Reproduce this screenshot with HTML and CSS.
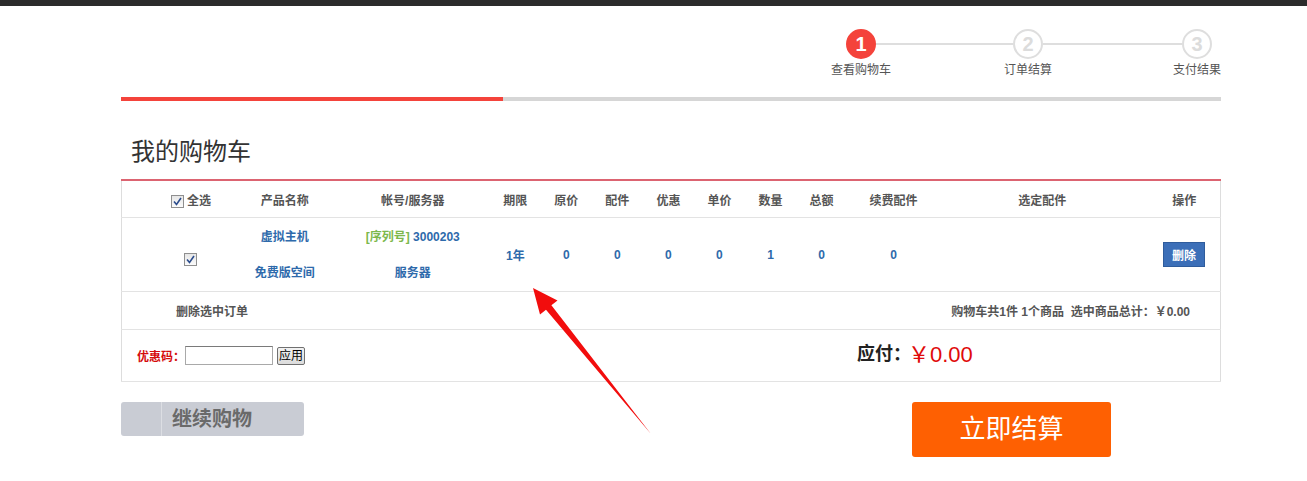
FILE: index.html
```html
<!DOCTYPE html>
<html lang="zh-CN">
<head>
  <meta charset="UTF-8">
  <title>我的购物车</title>
  <link rel="stylesheet" href="styles.css">
</head>
<body>
  <div class="topbar"></div>
  <div class="wrap">
    <div class="steps">
      <div class="step active">
        <span class="num">1</span>
        <span class="label">查看购物车</span>
      </div>
      <div class="line"></div>
      <div class="step">
        <span class="num">2</span>
        <span class="label">订单结算</span>
      </div>
      <div class="line"></div>
      <div class="step">
        <span class="num">3</span>
        <span class="label">支付结果</span>
      </div>
    </div>
    <div class="progress"><div class="progress-done"></div></div>

    <h1 class="title">我的购物车</h1>

    <table class="cart">
      <colgroup>
        <col style="width:118px"><col style="width:100px"><col style="width:150px">
        <col style="width:51px"><col style="width:51px"><col style="width:51px"><col style="width:51px">
        <col style="width:51px"><col style="width:51px"><col style="width:51px">
        <col style="width:93px"><col style="width:204px"><col style="width:76px">
      </colgroup>
      <tr class="head">
        <th class="c-check"><span class="cb"><svg viewBox="0 0 11 11" width="11" height="11"><path d="M2 5.5 L4.5 8.5 L9 2" fill="none" stroke="#2b4c8c" stroke-width="1.6"/></svg></span> 全选</th>
        <th class="c-name">产品名称</th>
        <th class="c-acct">帐号/服务器</th>
        <th>期限</th>
        <th>原价</th>
        <th>配件</th>
        <th>优惠</th>
        <th>单价</th>
        <th>数量</th>
        <th>总额</th>
        <th>续费配件</th>
        <th>选定配件</th>
        <th class="c-op">操作</th>
      </tr>
      <tr class="item">
        <td class="c-check"><span class="cb"><svg viewBox="0 0 11 11" width="11" height="11"><path d="M2 5.5 L4.5 8.5 L9 2" fill="none" stroke="#2b4c8c" stroke-width="1.6"/></svg></span></td>
        <td class="c-name">
          <div class="cell-line"><a href="#">虚拟主机</a></div>
          <div class="cell-line"><a href="#">免费版空间</a></div>
        </td>
        <td class="c-acct">
          <div class="cell-line"><span class="serial">[序列号]</span> 3000203</div>
          <div class="cell-line"><a href="#">服务器</a></div>
        </td>
        <td><a href="#">1年</a></td>
        <td>0</td>
        <td>0</td>
        <td>0</td>
        <td>0</td>
        <td>1</td>
        <td>0</td>
        <td>0</td>
        <td></td>
        <td class="c-op"><button class="del">删除</button></td>
      </tr>
      <tr class="foot">
        <td colspan="13">
          <div class="foot-inner">
            <a href="#" class="del-selected">删除选中订单</a>
            <span class="summary">购物车共1件 1个商品&nbsp; 选中商品总计：￥0.00</span>
          </div>
        </td>
      </tr>
      <tr class="pay">
        <td colspan="13">
          <div class="pay-inner">
            <div class="coupon">
              <span class="coupon-label">优惠码：</span>
              <input type="text" class="coupon-input">
              <button class="coupon-btn">应用</button>
            </div>
            <div class="total">
              <span class="total-label">应付：</span>
              <span class="total-price">￥0.00</span>
            </div>
          </div>
        </td>
      </tr>
    </table>

    <div class="actions">
      <a href="#" class="btn-continue"><span class="btn-side"></span><span class="btn-text">继续购物</span></a>
      <a href="#" class="btn-checkout">立即结算</a>
    </div>
  </div>

  <svg class="arrow" width="1307" height="481" viewBox="0 0 1307 481">
    <polygon points="533,288 557.5,300.5 551.4,305.3 651,434 546,309.7 540,314.5" fill="#f20d0d"/>
  </svg>
</body>
</html>
```

FILE: styles.css
```css
body {
    margin: 0;
    font-family: "Liberation Sans", "Noto Sans CJK SC", sans-serif;
    font-size: 12px;
    color: #555;
    background: #fff;
}
a {
    text-decoration: none;
}
.topbar {
    height: 6px;
    background-color: #2b2b2b;
}
.wrap {
    width: 1100px;
    margin-left: 121px;
}

/* steps */
.steps {
    display: flex;
    justify-content: flex-end;
    align-items: flex-start;
    padding-top: 23px;
    padding-right: 9px;
}
.step {
    width: 30px;
    display: flex;
    flex-direction: column;
    align-items: center;
}
.step .num {
    box-sizing: border-box;
    width: 30px;
    height: 30px;
    border-radius: 50%;
    border: 2px solid #dedede;
    color: #dcdcdc;
    font-size: 20px;
    font-weight: bold;
    line-height: 26px;
    text-align: center;
}
.step.active .num {
    background-color: #f4433b;
    border-color: #f4433b;
    color: #fff;
}
.step .label {
    margin-top: 3px;
    white-space: nowrap;
    line-height: 16px;
    color: #555;
}
.line {
    width: 137px;
    height: 2px;
    margin-top: 14px;
    background-color: #dedede;
}
.line + .step + .line {
    width: 139px;
}
.progress {
    margin-top: 19px;
    height: 4px;
    background-color: #d6d6d6;
}
.progress-done {
    width: 382px;
    height: 4px;
    background-color: #f4433b;
}

.title {
    margin: 35px 0 11px 10px;
    font-size: 24px;
    font-weight: normal;
    line-height: 32px;
    color: #333;
}

/* cart table */
.cart {
    width: 1100px;
    table-layout: fixed;
    border-collapse: collapse;
    border: 1px solid #dddddd;
    border-top: 2px solid #dc6471;
}
.cart tr {
    border-bottom: 1px solid #e3e3e3;
}
.cart th {
    height: 36px;
    padding: 0;
    font-weight: bold;
    color: #555;
    text-align: center;
}
.cart td {
    padding: 0;
    text-align: center;
    vertical-align: middle;
    font-weight: bold;
    color: #2e6aab;
}
.cart .item td {
    height: 73px;
}
.cart .c-check {
    padding-left: 20px;
}
.cart .item .cb {
    margin-top: 9px;
}
.cart .c-name {
    padding-right: 10px;
}
.cart .c-acct {
    padding-right: 4px;
}
.cell-line {
    height: 36px;
    line-height: 36px;
    overflow: hidden;
    white-space: nowrap;
}
.cart .c-op {
    padding-left: 4px;
}
.cart td a {
    color: #2e6aab;
}
.serial {
    color: #7cb84c;
}
.cb {
    display: inline-block;
    box-sizing: border-box;
    width: 13px;
    height: 13px;
    border: 1px solid #8f8f8f;
    background: linear-gradient(#e6e6e6, #fbfbfb);
    vertical-align: -2px;
    line-height: 0;
}
.del {
    width: 42px;
    height: 25px;
    border: 1px solid #2f5c9c;
    background-color: #3c6fb8;
    color: #fff;
    font-family: inherit;
    font-size: 12px;
    font-weight: bold;
    padding: 0;
    cursor: pointer;
}

.cart .foot td {
    height: 37px;
}
.foot-inner {
    display: flex;
    justify-content: space-between;
    padding: 0 30px 0 54px;
}
.cart .foot .del-selected,
.cart .foot .summary {
    color: #555;
    font-weight: bold;
}

.cart .pay td {
    height: 51px;
}
.pay-inner {
    display: flex;
    align-items: center;
    justify-content: space-between;
}
.coupon {
    display: flex;
    align-items: center;
    padding-left: 15px;
}
.coupon-label {
    color: #d50c0c;
    font-weight: bold;
}
.coupon-input {
    box-sizing: border-box;
    width: 88px;
    height: 19px;
    margin: 0;
    border: 1px solid #a9a9a9;
    border-top-color: #7a7a7a;
}
.coupon-btn {
    box-sizing: border-box;
    height: 18px;
    margin-left: 4px;
    padding: 0 1px;
    border: 1px solid #707070;
    border-radius: 2px;
    background: linear-gradient(#f2f2f2, #dcdcdc);
    font-family: inherit;
    font-size: 12px;
    line-height: 14px;
    color: #000;
}
.total {
    width: 363px;
    display: flex;
    align-items: center;
    padding-bottom: 8px;
}
.total-label {
    font-size: 18px;
    font-weight: bold;
    color: #222;
}
.total-price {
    margin-left: -3px;
    font-size: 22px;
    font-weight: normal;
    color: #e00a0a;
}

/* buttons */
.actions {
    display: flex;
    align-items: flex-start;
    margin-top: 20px;
}
.btn-continue {
    display: flex;
    width: 183px;
    height: 34px;
    border-radius: 3px;
    background-color: #c9ccd4;
}
.btn-side {
    width: 40px;
    border-right: 1px solid #dcdee3;
}
.btn-text {
    padding-left: 10px;
    font-size: 20px;
    font-weight: bold;
    line-height: 34px;
    color: #6a6a6a;
}
.btn-checkout {
    width: 199px;
    height: 55px;
    margin-left: auto;
    margin-right: 110px;
    border-radius: 3px;
    background-color: #fe6002;
    color: #fff;
    font-size: 26px;
    line-height: 55px;
    text-align: center;
}

.arrow {
    position: absolute;
    top: 0;
    left: 0;
    pointer-events: none;
}
```
